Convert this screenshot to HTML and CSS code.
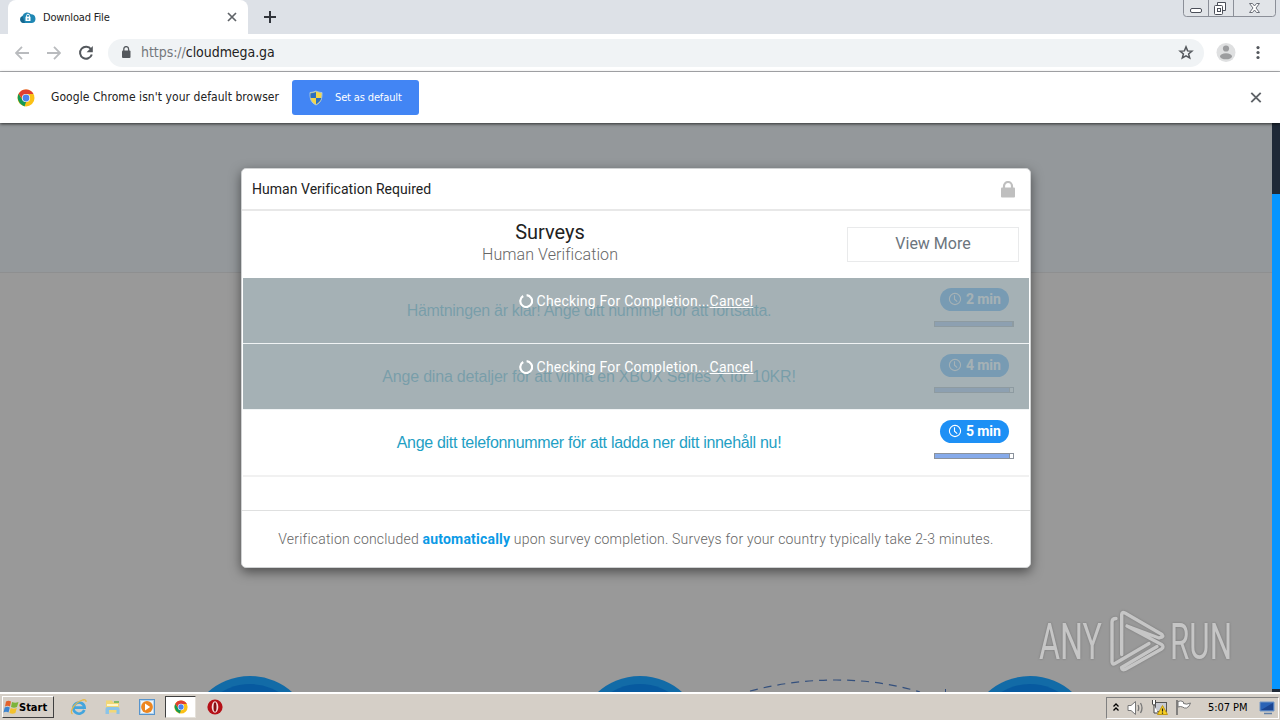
FILE: index.html
```
<!DOCTYPE html>
<html lang="en">
<head>
    <meta charset="UTF-8">
    <title>Download File</title>
    <link rel="stylesheet" href="styles.css">
</head>
<body>
    <svg class="defs" width="0" height="0">
        <symbol id="chrome-logo" viewBox="0 0 18 18">
            <circle cx="9" cy="9" r="8.5" fill="#fbc116"/>
            <path d="M5 15.9A8.5 8.5 0 0 1 1.6 4.8L5.6 11Q7 13 9 13L7.5 17.4z" fill="#149954"/>
            <path d="M1.6 4.8A8.5 8.5 0 0 1 16.5 5H9Q6 5 5.2 8.5L5 9.6z" fill="#df3e32"/>
            <circle cx="9" cy="9" r="4.1" fill="#fff"/>
            <circle cx="9" cy="9" r="3.4" fill="#4a83ee"/>
        </symbol>
        <symbol id="clock" viewBox="0 0 14 14">
            <circle cx="7" cy="7" r="5.6" fill="none" stroke="#fff" stroke-width="1.1"/>
            <path d="M6.5 3.2V7.2L9.2 9.6" fill="none" stroke="#fff" stroke-width="1.1"/>
        </symbol>
        <symbol id="spinner" viewBox="0 0 14 14">
            <path d="M7.6 1.2A5.9 5.9 0 1 1 4.2 2" fill="none" stroke="#fff" stroke-width="2.2"/>
        </symbol>
    </svg>

    <div class="tabstrip">
        <div class="tab">
            <svg width="17" height="13" viewBox="0 0 17 13">
                <path d="M4 12a3.7 3.7 0 0 1-.6-7A5 5 0 0 1 12 3.300 4.400 4.400 0 0 1 13 12z" fill="#1f87b4"/>
                <path d="M4 12a3.7 3.7 0 0 1-.6-7L6 12z" fill="#17688f"/>
                <path d="M6.500 5.700h5V10h-5z" fill="#fff"/>
                <path d="M7.600 6V4.600a1.400 1.400 0 0 1 2.800 0V6" fill="none" stroke="#fff"/>
                <path d="M9 7v2" stroke="#1f87b4"/>
            </svg>
            <span class="tab-title">Download File</span>
            <svg class="tab-close" width="10" height="10" viewBox="0 0 10 10"><path d="M1 1l8 8M9 1L1 9" stroke="#5f6368" stroke-width="1.7"/></svg>
        </div>
        <svg class="new-tab" width="12" height="12" viewBox="0 0 12 12"><path d="M6 0v12M0 6h12" stroke="#30343b" stroke-width="2"/></svg>
        <div class="window-buttons">
            <svg width="97" height="17" viewBox="0 0 97 17">
                <path d="M.5 0v13.500q0 3 3 3h86q3 0 3-3V0M25.500 0v16M50.500 0v16" fill="#e1e4e8" stroke="#8b8f98"/>
                <rect x="7.500" y="8.500" width="11" height="4" rx="1.500" fill="#fff" stroke="#4b4f59"/>
                <path d="M34.500 6V2.500h8v8H39" fill="#fff" stroke="#4b4f59"/>
                <rect x="31.500" y="5.500" width="8" height="9" rx="1" fill="#fff" stroke="#4b4f59"/>
                <rect x="34.500" y="8.500" width="3" height="3" fill="none" stroke="#4b4f59"/>
                <path d="M66.500 3.500h3l2 2.500 2-2.500h3l-3.500 4.500 3.500 4.500h-3l-2-2.500-2 2.500h-3l3.500-4.500z" fill="#fff" stroke="#6b6f78"/>
            </svg>
        </div>
    </div>

    <div class="toolbar">
        <svg class="nav" width="14" height="14" viewBox="0 0 14 14"><path d="M14 7H1M7 .8L.9 7 7 13.200" fill="none" stroke="#b9bbbe" stroke-width="1.800"/></svg>
        <svg class="nav" width="14" height="14" viewBox="0 0 14 14"><path d="M0 7h13M7 .8L13.100 7 7 13.200" fill="none" stroke="#b9bbbe" stroke-width="1.800"/></svg>
        <svg class="nav" width="16" height="16" viewBox="0 0 16 16"><path d="M13 4.300A6 6 0 1 0 13.800 9.500" fill="none" stroke="#54585d" stroke-width="2"/><path d="M14.800 1v6.200H8.600z" fill="#54585d"/></svg>
        <div class="omnibox">
            <svg width="10" height="13" viewBox="0 0 10 13"><rect x="1" y="4.500" width="8.500" height="7.500" rx="1" fill="#54585d"/><path d="M2.800 5V3a2.400 2.400 0 0 1 4.800 0v2" fill="none" stroke="#54585d" stroke-width="1.300"/></svg>
            <span class="url"><span class="scheme">https://</span>cloudmega.ga</span>
            <svg class="star" width="16" height="16" viewBox="0 0 16 16"><path d="M8 1.900l1.600 4 4.300.3-3.300 2.700 1.100 4.100L8 10.800 4.300 13l1.100-4.100-3.300-2.700 4.300-.3z" fill="none" stroke="#54585d" stroke-width="1.500"/></svg>
        </div>
        <svg class="avatar" width="20" height="20" viewBox="0 0 20 20"><circle cx="10" cy="9.500" r="9.500" fill="#dfe0e1"/><circle cx="10" cy="5.500" r="3.100" fill="#9c9d9f"/><ellipse cx="10" cy="13.300" rx="6" ry="3" fill="#9c9d9f"/></svg>
        <svg class="dots" width="4" height="14" viewBox="0 0 4 14"><circle cx="2" cy="1.600" r="1.600" fill="#54585d"/><circle cx="2" cy="6.500" r="1.600" fill="#54585d"/><circle cx="2" cy="11.500" r="1.600" fill="#54585d"/></svg>
    </div>

    <div class="infobar">
        <svg width="18" height="18"><use href="#chrome-logo"/></svg>
        <span class="infobar-text">Google Chrome isn't your default browser</span>
        <div class="default-btn">
            <svg width="14" height="16" viewBox="0 0 14 16">
                <path d="M7 1Q4 2.500 1 2.500C.8 9 2 12.500 7 15 12 12.500 13.200 9 13 2.500 10 2.500 7 1 7 1z" fill="#f3d64b" stroke="#a9c6dc"/>
                <path d="M7 2V8H1.700Q1.200 6 1.500 3.200 4 3.200 7 2zM7 8h5.300Q11.300 12 7 14.300z" fill="#2c6fc0"/>
            </svg>
            <span>Set as default</span>
        </div>
        <svg class="infobar-close" width="12" height="12" viewBox="0 0 12 12"><path d="M1.300 .8l9.400 9.400M10.700 .8l-9.400 9.400" stroke="#5f6368" stroke-width="1.900"/></svg>
    </div>

    <div class="page">
        <div class="site">
            <div class="site-header"></div>
            <svg class="steps" width="1272" height="18" viewBox="0 0 1272 18">
                <g fill="#126ba7"><circle cx="250" cy="65" r="63"/><circle cx="640" cy="65" r="63"/><circle cx="1030" cy="65" r="63"/></g>
                <g fill="#075aa0"><circle cx="250" cy="65" r="55"/><circle cx="640" cy="65" r="55"/><circle cx="1030" cy="65" r="55"/></g>
                <path d="M750 17Q792 6 836 6T920 18" fill="none" stroke="#34507d" stroke-width="1.200" stroke-dasharray="8 6"/>
                <path d="M945.500 15v3" stroke="#34507d"/>
            </svg>
        </div>
        <div class="scrollbar"><div class="thumb"></div></div>

        <div class="modal">
            <div class="modal-header">
                <span>Human Verification Required</span>
                <svg width="14" height="17" viewBox="0 0 14 17"><rect x="0" y="6.500" width="14" height="10" rx="1" fill="#bfbfbf"/><path d="M3 8V5a4 4 0 0 1 8 0v3" fill="none" stroke="#bfbfbf" stroke-width="2.200"/></svg>
            </div>
            <div class="surveys">
                <div class="surveys-title">
                    <div class="title">Surveys</div>
                    <div class="subtitle">Human Verification</div>
                </div>
                <div class="view-more"><span>View More</span></div>
            </div>
            <div class="offer">
                <div class="offer-text"><span class="dense">Hämtningen är klar! Ange ditt nummer för att fortsätta.</span></div>
                <div class="offer-side">
                    <div class="badge"><svg width="14" height="14"><use href="#clock"/></svg><span>2 min</span></div>
                    <div class="meter"><div class="fill full"></div></div>
                </div>
                <div class="checking"><svg width="14" height="14"><use href="#spinner"/></svg><span class="msg">Checking For Completion...<u>Cancel</u></span></div>
            </div>
            <div class="offer">
                <div class="offer-text"><span class="wide">Ange dina detaljer för att vinna en XBOX Series X för 10KR!</span></div>
                <div class="offer-side">
                    <div class="badge"><svg width="14" height="14"><use href="#clock"/></svg><span>4 min</span></div>
                    <div class="meter"><div class="fill"></div></div>
                </div>
                <div class="checking"><svg width="14" height="14"><use href="#spinner"/></svg><span class="msg">Checking For Completion...<u>Cancel</u></span></div>
            </div>
            <div class="offer last">
                <div class="offer-text"><span class="dense">Ange ditt telefonnummer för att ladda ner ditt innehåll nu!</span></div>
                <div class="offer-side">
                    <div class="badge"><svg width="14" height="14"><use href="#clock"/></svg><span>5 min</span></div>
                    <div class="meter"><div class="fill"></div></div>
                </div>
            </div>
            <div class="modal-footer"><span>Verification concluded <b>automatically</b> upon survey completion. Surveys for your country typically take 2-3 minutes.</span></div>
        </div>

        <svg class="watermark" width="210" height="72" viewBox="0 0 210 72">
            <g class="wm-text">
                <text x="3" y="51" textLength="63" lengthAdjust="spacingAndGlyphs">ANY</text>
                <text x="134" y="51" textLength="62" lengthAdjust="spacingAndGlyphs">RUN</text>
            </g>
            <g class="wm-logo">
                <path d="M80 10.500Q76 10.500 76 14V54Q76.500 57 79 55.500L113 35.500"/>
                <path d="M85.700 46.500V6.500Q86 3.500 89 5L126 26.500Q128 29 124.500 29.500"/>
                <path d="M91 18L125.500 36.500Q128.500 38.500 125.500 41L89 61.500Q86 62.500 85.500 59.500M91 18L123 30M85.500 59.500L121 38.500"/>
            </g>
        </svg>
    </div>

    <div class="taskbar">
        <div class="start">
            <svg width="16" height="16" viewBox="0 0 16 16">
                <path d="M3 2.500Q5.500.8 8 2.500L7 7.500Q4.500 6 2 7.500z" fill="#e3622b"/>
                <path d="M9 3Q12 4.500 15.500 3L14 8Q11 9.500 8 8z" fill="#7cb43c"/>
                <path d="M1.700 8.500Q4.500 7 6.800 8.500L5.500 13.500Q3 12 .5 13.500z" fill="#3d85cf"/>
                <path d="M7.700 9Q10.500 10.500 13.800 9L12.400 14Q9.500 15.500 6.400 14z" fill="#f3c22d"/>
            </svg>
            <b>Start</b>
        </div>
        <div class="quick">
            <svg width="18" height="18" viewBox="0 0 18 18">
                <path d="M14.300 12A5.600 5.600 0 1 1 14.600 9.700H4.500" fill="none" stroke="#43a5dd" stroke-width="2.700"/>
                <path d="M2.500 16C-1 14 4 5 12.500 2q4-1 3.500 2" fill="none" stroke="#e5b94b" stroke-width="1.300"/>
            </svg>
            <svg width="18" height="18" viewBox="0 0 18 18">
                <path d="M2 2.500h6l1 2h6v10H2z" fill="#f1d777"/><path d="M3 6h11v2H3z" fill="#fff6c8"/>
                <path d="M1.500 16v-5q0-2 2-2h10q2 0 2 2v5h-3v-4H5v4z" fill="#8bc4e8"/><path d="M10 3h5v2h-5z" fill="#82ba68"/>
            </svg>
            <svg width="18" height="18" viewBox="0 0 18 18">
                <rect x="1.500" y="1.500" width="15" height="15" fill="#b5d5ef" stroke="#5794cc"/><rect x="3" y="3" width="12" height="12" fill="#eef6fc"/>
                <circle cx="9" cy="9" r="5.900" fill="#ec8620"/><path d="M7 5.500v7L12.200 9z" fill="#fff"/>
            </svg>
            <div class="active-task"><svg width="14" height="14"><use href="#chrome-logo"/></svg></div>
            <svg width="16" height="16" viewBox="0 0 16 16"><circle cx="8" cy="8" r="7.600" fill="#b51017"/><ellipse cx="8" cy="8" rx="3.300" ry="5.800" fill="#f7dede"/><ellipse cx="8" cy="8" rx="1.500" ry="4.700" fill="#861014"/></svg>
        </div>
        <div class="tray">
            <svg width="8" height="10" viewBox="0 0 8 10"><path d="M1.500 3.500L4 1l2.500 2.500M1.500 7.500L4 5l2.500 2.500" fill="none" stroke="#000" stroke-width="1.300"/></svg>
            <svg width="17" height="16" viewBox="0 0 17 16"><path d="M1 5.500h3L8.500 1.500v13L4 10.500H1z" fill="#fff" stroke="#777"/><path d="M11 5q1.500 3 0 6M13.500 3q3 5 0 10" fill="none" stroke="#777" stroke-width="1.300"/></svg>
            <svg width="17" height="16" viewBox="0 0 17 16"><rect x="4.500" y="2.500" width="11" height="9" fill="#c8cbd3" stroke="#555"/><path d="M1.500 0v4q0 1 1.500 1t1.500-1V0M3 5v8h4" fill="#fff" stroke="#444"/><path d="M11.500 5.500l5 9h-10z" fill="#f6cf23" stroke="#c29810"/><path d="M11.500 8.500v3M11.500 12.500v1.200" stroke="#222" stroke-width="1.200"/></svg>
            <svg width="17" height="16" viewBox="0 0 17 16"><path d="M2 0v15" stroke="#666" stroke-width="1.500"/><path d="M3 1.500Q6 0 8.500 2v1.500q3 1.500 7-.5-1 4-4 5-2 .5-4-1-2-1-4.500 0z" fill="#fff" stroke="#777"/></svg>
            <span class="time">5:07 PM</span>
            <svg width="16" height="14" viewBox="0 0 16 14"><path d="M1 1h14v9H1z" fill="#2b63b6" stroke="#7597c4"/><path d="M2 9L14 2v7z" fill="#1b4591"/><path d="M5 12.500h8" stroke="#607ea5" stroke-width="1.500"/></svg>
        </div>
    </div>
</body>
</html>
```
FILE: styles.css
```
body {
    margin: 0;
    width: 1280px;
    height: 720px;
    overflow: hidden;
    display: flex;
    flex-direction: column;
    background: #fff;
    color: #222;
    font-family: "DejaVu Sans Condensed", "DejaVu Sans", sans-serif;
    font-size: 11px;
}
svg {
    flex: none;
    display: block;
}
span {
    white-space: nowrap;
}
.defs {
    position: absolute;
}

/* browser chrome */
.tabstrip {
    height: 34px;
    flex: none;
    background: #dde1e7;
    display: flex;
    align-items: center;
    padding-left: 8px;
}
.tab {
    box-sizing: border-box;
    width: 240px;
    height: 34px;
    background: #fff;
    border-radius: 8px 8px 0 0;
    display: flex;
    align-items: center;
    padding: 0 11px 0 11px;
}
.tab-title {
    margin-left: 7px;
    letter-spacing: -0.17px;
}
.tab-close {
    margin-left: auto;
}
.new-tab {
    margin-left: 16px;
}
.window-buttons {
    margin-left: auto;
    align-self: flex-start;
}
.toolbar {
    height: 37px;
    flex: none;
    border-bottom: 1px solid #b3b5b8;
    display: flex;
    align-items: center;
    padding-left: 15px;
}
.nav {
    margin-right: 18px;
}
.nav:nth-child(3) {
    margin: 0 14px 0 -1px;
}
.omnibox {
    box-sizing: border-box;
    width: 1096px;
    height: 28px;
    border-radius: 14px;
    background: #f0f3f5;
    display: flex;
    align-items: center;
    padding: 0 10px 0 13px;
}
.url {
    margin: 0 0 2px 10px;
    font-size: 14px;
    letter-spacing: -0.05px;
}
.scheme {
    color: #74787c;
}
.star {
    margin-left: auto;
}
.avatar {
    margin-left: 12px;
}
.dots {
    margin-left: 20px;
}
.infobar {
    height: 51px;
    flex: none;
    display: flex;
    align-items: center;
    padding: 0 18px 0 17px;
    position: relative;
    z-index: 2;
    background: #fff;
    box-shadow: 0 1px 3px rgba(0,0,0,0.7);
}
.infobar-text {
    margin: 0 0 2px 16px;
    width: 241px;
    font-size: 12px;
    letter-spacing: 0.06px;
}
.default-btn {
    box-sizing: border-box;
    width: 127px;
    height: 35px;
    border-radius: 3px;
    background: #4285f4;
    color: #fff;
    display: flex;
    align-items: center;
    padding-left: 17px;
    gap: 12px;
    letter-spacing: -0.14px;
}
.infobar-close {
    margin-left: auto;
}

/* page content */
.page {
    flex: 1;
    min-height: 0;
    display: flex;
    position: relative;
    font-family: Roboto, sans-serif;
}
.site {
    width: 1272px;
    background: #999;
    display: flex;
    flex-direction: column;
    justify-content: space-between;
}
.site-header {
    height: 149px;
    background: #94989b;
    border-bottom: 1px solid #8e8f90;
}
.scrollbar {
    width: 8px;
    box-sizing: border-box;
    background: #1f2937;
    padding: 71px 0 3px;
}
.thumb {
    height: 100%;
    background: #0695ff;
}
.modal {
    position: absolute;
    left: 241px;
    top: 45px;
    box-sizing: border-box;
    width: 790px;
    height: 400px;
    border: 1px solid #d0d2d3;
    border-radius: 5px;
    background: #fff;
    box-shadow: 0 4px 12px rgba(0,0,0,0.5);
    display: flex;
    flex-direction: column;
}
.modal-header {
    height: 40px;
    border-bottom: 2px solid #e8e8e8;
    display: flex;
    align-items: center;
    justify-content: space-between;
    padding: 0 15px 0 10px;
    font-size: 14px;
    letter-spacing: 0.03px;
}
.surveys {
    height: 67px;
    display: flex;
    align-items: center;
    padding-right: 11px;
}
.surveys-title {
    flex: 1;
    text-align: center;
    padding: 0 0 3px 11px;
}
.title {
    font-size: 20px;
    line-height: 23px;
}
.subtitle {
    font-size: 16px;
    line-height: 21px;
    font-weight: 300;
    letter-spacing: 0.08px;
    color: #666;
}
.view-more {
    box-sizing: border-box;
    width: 172px;
    height: 35px;
    border: 1px solid #e9eaeb;
    text-align: center;
    line-height: 32px;
    font-size: 16px;
    color: #6c757d;
}
.offer {
    position: relative;
    box-sizing: border-box;
    height: 66px;
    margin: 0 1px;
    border-bottom: 1px solid #f0f3f4;
    display: flex;
}
.offer.last {
    height: 67px;
    border-bottom: 2px solid #f1f1f1;
}
.offer-text {
    flex: 1;
    text-align: center;
    line-height: 65px;
    font-family: "Liberation Sans", Arial, sans-serif;
    font-size: 16px;
    color: #1fa0c4;
}
.dense {
    letter-spacing: -0.31px;
}
.wide {
    letter-spacing: -0.2px;
}
.offer-side {
    width: 94px;
    padding-top: 10px;
}
.badge {
    box-sizing: border-box;
    width: 69px;
    height: 23px;
    margin-left: 5px;
    border-radius: 12px;
    background: #1e90f5;
    color: #fff;
    font-size: 14px;
    font-weight: bold;
    display: flex;
    align-items: center;
    gap: 4px;
    padding: 0 0 1px 8px;
    letter-spacing: -0.1px;
}
.meter {
    box-sizing: border-box;
    width: 80px;
    height: 6px;
    margin: 10px 0 0 -1px;
    border: 1px solid #8b929c;
}
.fill {
    width: 74px;
    height: 4px;
    background: #86aaea;
    border-right: 1px solid #8b929c;
}
.fill.full {
    width: 77px;
}
.checking {
    position: absolute;
    left: 0;
    top: 0;
    right: 0;
    bottom: 0;
    background: rgba(142,157,163,0.8);
    color: #fff;
    font-size: 14px;
    display: flex;
    justify-content: center;
    align-items: flex-start;
    gap: 4px;
    padding-top: 15px;
    line-height: 17px;
}
.checking svg {
    margin-top: 1px;
}
.msg {
    letter-spacing: 0.2px;
}
.modal-footer {
    height: 56px;
    margin-top: 33px;
    border-top: 1px solid #dfe0e0;
    text-align: center;
    line-height: 56px;
    font-size: 14px;
    font-weight: 300;
    letter-spacing: 0.2px;
    color: #666;
}
.modal-footer b {
    color: #0b9ae6;
    font-weight: 700;
}
.watermark {
    position: absolute;
    left: 1036px;
    top: 485px;
    filter: drop-shadow(0 0 1px #777);
}
.wm-text {
    font-family: Roboto, sans-serif;
    font-size: 50px;
    fill: #c6c6c6;
}
.wm-logo {
    fill: none;
    stroke: #c6c6c6;
    stroke-width: 3.4;
    stroke-linejoin: round;
    stroke-linecap: round;
}

/* windows taskbar */
.taskbar {
    box-sizing: border-box;
    height: 28px;
    flex: none;
    border-top: 2px solid #fff;
    background: #d5cfc7;
    display: flex;
    align-items: center;
    color: #000;
    position: relative;
}
.start {
    box-sizing: border-box;
    width: 52px;
    height: 22px;
    margin-left: 2px;
    border: 1px solid #fff;
    border-right-color: #404040;
    border-bottom-color: #404040;
    display: flex;
    align-items: center;
    letter-spacing: 0;
}
.quick {
    display: flex;
    align-items: center;
    margin-left: 16px;
    gap: 16px;
}
.active-task {
    box-sizing: border-box;
    width: 31px;
    height: 22px;
    margin: 0 -5px 0 -7px;
    background: #fff;
    border: 1px solid #e5e1da;
    border-top-color: #404040;
    border-left-color: #404040;
    display: flex;
    align-items: center;
    justify-content: center;
}
.tray {
    box-sizing: border-box;
    width: 173px;
    height: 22px;
    margin: 1px 1px 0 auto;
    border: 1px solid #fff;
    border-top-color: #808080;
    border-left-color: #808080;
    display: flex;
    align-items: center;
    padding-left: 5px;
    gap: 7px;
}
.time {
    margin: 0 4px 0 9px;
    letter-spacing: -0.05px;
}
```
